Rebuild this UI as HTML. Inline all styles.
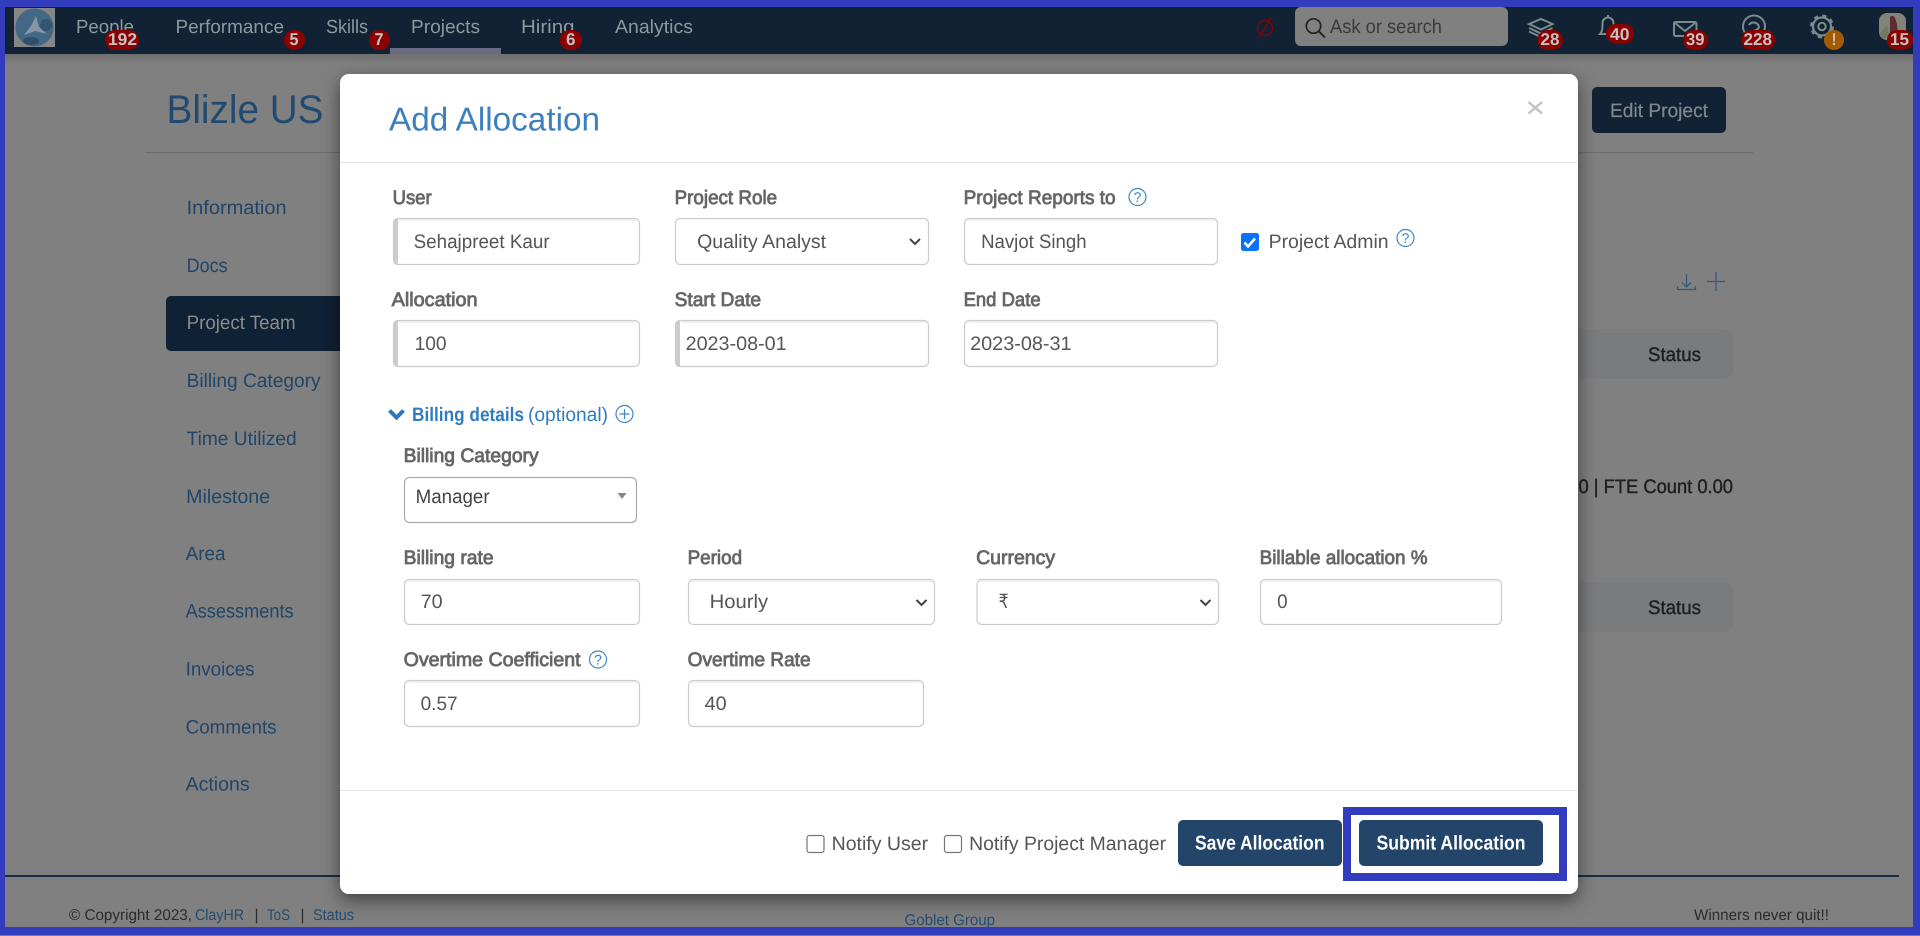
<!DOCTYPE html>
<html lang="en">
<head>
<meta charset="utf-8">
<title>Add Allocation</title>
<style>
html,body{margin:0;padding:0;background:#808080;width:1920px;height:936px;overflow:hidden}
svg{display:block;position:absolute;left:0;top:0}
text{font-family:"Liberation Sans",sans-serif;text-rendering:geometricPrecision;white-space:pre}
.nav{font-size:19px;fill:#8b9a9d}
.bd{font-size:17px;font-weight:bold;fill:#c6c2c2}
.side{font-size:19.5px;fill:#1f4568;transform:translate(-.4px,-.8px)}
.lb{font-size:19.5px;fill:#666;stroke:#666;stroke-width:.8px;transform:translate(-.4px,-.8px)}
.val{font-size:19.5px;fill:#555;transform:translate(-.4px,-.8px)}
.ft{font-size:15.5px;fill:#2b2b2b}
.lk{font-size:15.5px;fill:#234c70}
.st{font-size:19.5px;fill:#1f1f1f;stroke:#1f1f1f;stroke-width:.4px}
.btn{font-size:20px;font-weight:bold;fill:#fff;transform:translateY(-.4px)}
.inp{fill:#fff;stroke:#ccc;stroke-width:1.2px}
.tp{stroke:#ececec;stroke-width:1.5px}
.band{fill:#ccc}
.chev{fill:none;stroke:#444;stroke-width:2px}
.q{fill:none;stroke:#3f86c8;stroke-width:1.2px}
.qt{font-size:14px;fill:#3f86c8;text-anchor:middle}
.hi{fill:none;stroke:#7b8b90;stroke-width:2px}
.red{fill:#8b0000}
</style>
</head>
<body>
<svg width="1920" height="936" viewBox="0 0 1920 936" xmlns="http://www.w3.org/2000/svg">
<defs>
<linearGradient id="hs" x1="0" y1="0" x2="0" y2="1"><stop offset="0" stop-color="#6e6e6e"/><stop offset="1" stop-color="#808080"/></linearGradient>
<filter id="ms" x="-5%" y="-8%" width="110%" height="116%"><feDropShadow dx="0" dy="6" stdDeviation="9" flood-color="#000" flood-opacity=".5"/></filter>
</defs>

<!-- page background -->
<rect width="1920" height="936" fill="#808080"/>
<rect x="0" y="54" width="1920" height="10" fill="url(#hs)"/>

<!-- header -->
<rect x="0" y="0" width="1920" height="54" fill="#102234"/>
<rect x="14" y="8" width="41" height="39" fill="#868686"/>
<ellipse cx="34.5" cy="27.5" rx="19" ry="19" fill="#426886"/>
<circle cx="46" cy="25" r="6" fill="#335572"/>
<ellipse cx="31" cy="41" rx="8" ry="4" fill="#2f4e6a"/>
<path d="M36 16L39 27 47 34 35 31 24 35 31 26z" fill="#8796a2"/>

<text class="nav" x="76" y="33" textLength="58" lengthAdjust="spacingAndGlyphs">People</text>
<text class="nav" x="175.5" y="33" textLength="108.5" lengthAdjust="spacingAndGlyphs">Performance</text>
<text class="nav" x="326" y="33" textLength="42" lengthAdjust="spacingAndGlyphs">Skills</text>
<text class="nav" x="411" y="33" textLength="69" lengthAdjust="spacingAndGlyphs">Projects</text>
<text class="nav" x="521" y="33" textLength="53.5" lengthAdjust="spacingAndGlyphs">Hiring</text>
<text class="nav" x="615" y="33" textLength="78" lengthAdjust="spacingAndGlyphs">Analytics</text>
<rect x="390" y="48" width="111" height="6" fill="#6a6a85"/>

<rect class="red" x="105" y="30" width="34" height="20" rx="10"/>
<text class="bd" x="108" y="45" textLength="29" lengthAdjust="spacingAndGlyphs">192</text>
<rect class="red" x="284" y="30" width="21" height="20" rx="10"/>
<text class="bd" x="289.5" y="45" textLength="9" lengthAdjust="spacingAndGlyphs">5</text>
<rect class="red" x="369" y="30" width="21" height="20" rx="10"/>
<text class="bd" x="374.5" y="45" textLength="9" lengthAdjust="spacingAndGlyphs">7</text>
<rect class="red" x="560" y="30" width="22" height="20" rx="10"/>
<text class="bd" x="566" y="45" textLength="9.5" lengthAdjust="spacingAndGlyphs">6</text>

<!-- stopwatch off -->
<g fill="none" stroke="#8b0000" stroke-width="1.3">
<ellipse cx="1265" cy="28" rx="7.5" ry="7.5"/>
<path d="M1271 18L1259 38"/>
</g>

<!-- search -->
<rect x="1295" y="7" width="213" height="39" rx="6" fill="#808080"/>
<circle cx="1313.5" cy="26" r="7.2" fill="none" stroke="#222" stroke-width="1.7"/>
<path d="M1318.6 31.2L1325 37.5" stroke="#222" stroke-width="1.9" fill="none"/>
<text x="1330" y="33" font-size="19.5" fill="#3a3a3a" textLength="112" lengthAdjust="spacingAndGlyphs">Ask or search</text>

<!-- layers icon -->
<path class="hi" d="M1529 24L1541 19l11.500 5-11.500 5.500z"/>
<path class="hi" d="M1529 28L1541 33.500l11.500-5.500"/>
<path class="hi" d="M1529 31.500L1541 37l6-2.500"/>
<rect class="red" x="1537.500" y="30" width="25.500" height="20" rx="10"/>
<text class="bd" x="1540.500" y="45" textLength="19" lengthAdjust="spacingAndGlyphs">28</text>

<!-- bell -->
<path class="hi" d="M1600 34c2.500-2.500 2.500-6 2.500-11a5.500 5.500 0 0 1 11 0c0 5 0 8.500 2.500 11z"/>
<path class="hi" d="M1608 17v-2"/>
<rect class="red" x="1606" y="24" width="28" height="19.500" rx="9.700"/>
<text class="bd" x="1610" y="40" textLength="19.500" lengthAdjust="spacingAndGlyphs">40</text>

<!-- mail -->
<rect class="hi" x="1674" y="22" width="22.500" height="14" rx="1.500"/>
<path class="hi" d="M1675 23l10 8 10-8"/>
<rect class="red" x="1683" y="30" width="25" height="20" rx="10"/>
<text class="bd" x="1686" y="45" textLength="18.500" lengthAdjust="spacingAndGlyphs">39</text>

<!-- speedometer -->
<path class="hi" d="M1746 34a11 11 0 1 1 16 0"/>
<path class="hi" d="M1749 25a5.500 5.500 0 0 1 10 2c0 2-3 3-5 4"/>
<rect class="red" x="1741" y="30" width="34" height="20" rx="10"/>
<text class="bd" x="1743.500" y="45" textLength="28.500" lengthAdjust="spacingAndGlyphs">228</text>

<!-- gear -->
<circle cx="1822" cy="26.500" r="9" fill="none" stroke="#7b8b90" stroke-width="2.200"/>
<circle cx="1822" cy="26.500" r="10.500" fill="none" stroke="#7b8b90" stroke-width="3" stroke-dasharray="4.120 4.120"/>
<circle class="hi" cx="1822" cy="26.500" r="3.700"/>
<rect x="1824" y="30" width="20" height="20" rx="10" fill="#a45a00"/>
<text class="bd" x="1831.500" y="45" textLength="5" lengthAdjust="spacingAndGlyphs">!</text>

<!-- avatar -->
<rect x="1879" y="13" width="27" height="27" rx="8" fill="#85827a"/>
<path d="M1890 17c2-2 4-1 5 1l2 6 1 12h-8z" fill="#5d2b30"/>
<path d="M1880 33l7-8 3 13h-8z" fill="#6f7a5e"/>
<rect class="red" x="1887" y="30" width="26" height="20" rx="10"/>
<text class="bd" x="1890" y="45" textLength="19" lengthAdjust="spacingAndGlyphs">15</text>

<!-- page beneath the overlay -->
<text x="166.500" y="123" font-size="40" fill="#214a70" textLength="157" lengthAdjust="spacingAndGlyphs">Blizle US</text>
<rect x="145" y="152" width="1608" height="1" fill="#6c6c6c"/>
<rect x="1592" y="87" width="134" height="46" rx="5" fill="#102234"/>
<text x="1610" y="117" font-size="19.5" fill="#7f8a8f" stroke="#7f8a8f" stroke-width=".2" textLength="98" lengthAdjust="spacingAndGlyphs">Edit Project</text>

<text class="side" x="187" y="215" textLength="100" lengthAdjust="spacingAndGlyphs">Information</text>
<text class="side" x="187" y="273" textLength="41" lengthAdjust="spacingAndGlyphs">Docs</text>
<rect x="166" y="296" width="200" height="55" rx="5" fill="#0f2134"/>
<text class="side" style="fill:#8c8c8c" x="187" y="330" textLength="109" lengthAdjust="spacingAndGlyphs">Project Team</text>
<text class="side" x="187" y="388" textLength="134" lengthAdjust="spacingAndGlyphs">Billing Category</text>
<text class="side" x="187" y="446" textLength="110" lengthAdjust="spacingAndGlyphs">Time Utilized</text>
<text class="side" x="186.500" y="504" textLength="84" lengthAdjust="spacingAndGlyphs">Milestone</text>
<text class="side" x="186" y="561" textLength="40" lengthAdjust="spacingAndGlyphs">Area</text>
<text class="side" x="186" y="618.500" textLength="108" lengthAdjust="spacingAndGlyphs">Assessments</text>
<text class="side" x="186" y="676.500" textLength="69" lengthAdjust="spacingAndGlyphs">Invoices</text>
<text class="side" x="186" y="734.500" textLength="91" lengthAdjust="spacingAndGlyphs">Comments</text>
<text class="side" x="186" y="791.500" textLength="64" lengthAdjust="spacingAndGlyphs">Actions</text>

<!-- download and plus -->
<g fill="none" stroke="#2f5a85" stroke-width="1.300">
<path d="M1686.500 274v13M1682 282.500l4.500 4.500 4.500-4.500"/>
<path d="M1677.500 286v3.500h18v-3.500"/>
<path d="M1716 272v19M1707 281.500h18"/>
</g>

<!-- table fragments -->
<rect x="1500" y="329" width="233" height="50" rx="9" fill="#7a7b7d"/>
<text class="st" x="1648" y="361" textLength="53" lengthAdjust="spacingAndGlyphs">Status</text>
<text class="st" x="1578.500" y="493" textLength="154.500" lengthAdjust="spacingAndGlyphs">0 | FTE Count 0.00</text>
<rect x="1500" y="582" width="233" height="50" rx="9" fill="#7a7b7d"/>
<text class="st" x="1648" y="614" textLength="53" lengthAdjust="spacingAndGlyphs">Status</text>

<!-- footer -->
<rect x="5" y="875" width="1894" height="2" fill="#12304a"/>
<text class="ft" x="69" y="920" textLength="123" lengthAdjust="spacingAndGlyphs">© Copyright 2023,</text>
<text class="lk" x="195" y="920" textLength="49" lengthAdjust="spacingAndGlyphs">ClayHR</text>
<text class="ft" x="254.500" y="920">|</text>
<text class="lk" x="267" y="920" textLength="23" lengthAdjust="spacingAndGlyphs">ToS</text>
<text class="ft" x="300.500" y="920">|</text>
<text class="lk" x="313" y="920" textLength="41" lengthAdjust="spacingAndGlyphs">Status</text>
<text class="lk" x="904.500" y="925" textLength="90.500" lengthAdjust="spacingAndGlyphs">Goblet Group</text>
<text class="ft" x="1694" y="920" textLength="135" lengthAdjust="spacingAndGlyphs">Winners never quit!!</text>

<!-- modal -->
<rect x="340" y="74" width="1238" height="820" rx="9" fill="#fff" filter="url(#ms)"/>
<rect x="340" y="162" width="1238" height="1" fill="#e5e5e5"/>
<rect x="340" y="790" width="1238" height="1" fill="#e5e5e5"/>
<text x="389" y="130.500" font-size="33" fill="#3a7fbf" textLength="211" lengthAdjust="spacingAndGlyphs">Add Allocation</text>
<path d="M1528.500 102l13.500 11.500M1542 102l-13.500 11.500" stroke="#c6c6c6" stroke-width="2.500" fill="none"/>

<!-- row 1 -->
<text class="lb" x="393" y="205" textLength="39" lengthAdjust="spacingAndGlyphs">User</text>
<rect class="inp" x="393.500" y="218.500" width="246" height="46" rx="5"/>
<path class="band" d="M398 218v47h-1a4.500 4.500 0 0 1-4-4.500v-38a4.500 4.500 0 0 1 4-4.500z"/>
<path class="tp" d="M399 220h237"/>
<text class="val" x="414" y="249" textLength="136" lengthAdjust="spacingAndGlyphs">Sehajpreet Kaur</text>

<text class="lb" x="675" y="205" textLength="102.500" lengthAdjust="spacingAndGlyphs">Project Role</text>
<rect class="inp" x="675.500" y="218.500" width="253" height="46" rx="5"/>
<text class="val" x="697.500" y="249" textLength="129" lengthAdjust="spacingAndGlyphs">Quality Analyst</text>
<path class="chev" d="M910 239l5 5 5-5"/>

<text class="lb" x="964" y="205" textLength="152" lengthAdjust="spacingAndGlyphs">Project Reports to</text>
<circle class="q" cx="1137.500" cy="197" r="8.500"/>
<text class="qt" x="1137.500" y="202">?</text>
<rect class="inp" x="964.500" y="218.500" width="253" height="46" rx="5"/>
<path class="tp" d="M967 220h248"/>
<text class="val" x="981.500" y="249" textLength="105.500" lengthAdjust="spacingAndGlyphs">Navjot Singh</text>

<rect x="1241" y="233" width="18" height="18" rx="2.500" fill="#0a72f5"/>
<path d="M1244.500 242.500l3.500 4 7-8" fill="none" stroke="#fff" stroke-width="2.500"/>
<text class="val" x="1269" y="249" textLength="120" lengthAdjust="spacingAndGlyphs">Project Admin</text>
<circle class="q" cx="1405.500" cy="238" r="8.500"/>
<text class="qt" x="1405.500" y="243">?</text>

<!-- row 2 -->
<text class="lb" x="392" y="307" textLength="86" lengthAdjust="spacingAndGlyphs">Allocation</text>
<rect class="inp" x="393.500" y="320.500" width="246" height="46" rx="5"/>
<path class="band" d="M398 320v47h-1a4.500 4.500 0 0 1-4-4.500v-38a4.500 4.500 0 0 1 4-4.500z"/>
<path class="tp" d="M399 322h237"/>
<text class="val" x="415" y="351" textLength="32" lengthAdjust="spacingAndGlyphs">100</text>

<text class="lb" x="675" y="307" textLength="86.500" lengthAdjust="spacingAndGlyphs">Start Date</text>
<rect class="inp" x="675.500" y="320.500" width="253" height="46" rx="5"/>
<path class="band" d="M680 320v47h-1a4.500 4.500 0 0 1-4-4.500v-38a4.500 4.500 0 0 1 4-4.500z"/>
<path class="tp" d="M681 322h244"/>
<text class="val" x="686" y="351" textLength="101" lengthAdjust="spacingAndGlyphs">2023-08-01</text>

<text class="lb" x="964" y="307" textLength="77" lengthAdjust="spacingAndGlyphs">End Date</text>
<rect class="inp" x="964.500" y="320.500" width="253" height="46" rx="5"/>
<path class="tp" d="M967 322h248"/>
<text class="val" x="970.500" y="351" textLength="101.500" lengthAdjust="spacingAndGlyphs">2023-08-31</text>

<!-- billing details -->
<path d="M389.500 410.500l7 7 7-7" fill="none" stroke="#2a78bd" stroke-width="4"/>
<text x="412" y="421" font-size="19.500" font-weight="bold" fill="#2f7cc0" textLength="112" lengthAdjust="spacingAndGlyphs">Billing details</text>
<text x="528" y="421" font-size="19.500" fill="#2f7cc0" textLength="80" lengthAdjust="spacingAndGlyphs">(optional)</text>
<circle class="q" cx="624.500" cy="414" r="8.500"/>
<path class="q" d="M624.500 409v10M619.500 414h10"/>

<text class="lb" x="404" y="463" textLength="135" lengthAdjust="spacingAndGlyphs">Billing Category</text>
<rect x="404.500" y="477.500" width="232" height="45" rx="5" fill="#fff" stroke="#aaa" stroke-width="1.200"/>
<text class="val" style="fill:#444" x="416" y="504" textLength="74" lengthAdjust="spacingAndGlyphs">Manager</text>
<path d="M617.500 493h9l-4.500 6z" fill="#888"/>

<!-- row 3 -->
<text class="lb" x="404" y="565" textLength="90" lengthAdjust="spacingAndGlyphs">Billing rate</text>
<rect class="inp" x="404.500" y="579.500" width="235" height="45" rx="5"/>
<path class="tp" d="M407 581h230"/>
<text class="val" x="421" y="609" textLength="22" lengthAdjust="spacingAndGlyphs">70</text>

<text class="lb" x="688" y="565" textLength="54.500" lengthAdjust="spacingAndGlyphs">Period</text>
<rect class="inp" x="688.500" y="579.500" width="246" height="45" rx="5"/>
<path class="tp" d="M691 581h241"/>
<text class="val" x="710" y="609" textLength="58.500" lengthAdjust="spacingAndGlyphs">Hourly</text>
<path class="chev" d="M916.500 600l5 5 5-5"/>

<text class="lb" x="976.500" y="565" textLength="79" lengthAdjust="spacingAndGlyphs">Currency</text>
<rect class="inp" x="977" y="579.500" width="241.500" height="45" rx="5"/>
<path class="tp" d="M980 581h236"/>
<text class="val" x="999" y="609" textLength="10" lengthAdjust="spacingAndGlyphs">₹</text>
<path class="chev" d="M1200.500 600l5 5 5-5"/>

<text class="lb" x="1260" y="565" textLength="168" lengthAdjust="spacingAndGlyphs">Billable allocation %</text>
<rect class="inp" x="1260.500" y="579.500" width="241" height="45" rx="5"/>
<path class="tp" d="M1263 581h236"/>
<text class="val" x="1277.500" y="609" textLength="10.500" lengthAdjust="spacingAndGlyphs">0</text>

<!-- row 4 -->
<text class="lb" x="404" y="667" textLength="177" lengthAdjust="spacingAndGlyphs">Overtime Coefficient</text>
<circle class="q" cx="598" cy="659.500" r="8.500"/>
<text class="qt" x="598" y="664.500">?</text>
<rect class="inp" x="404.500" y="680.500" width="235" height="46" rx="5"/>
<path class="tp" d="M407 682h230"/>
<text class="val" x="421" y="711" textLength="37" lengthAdjust="spacingAndGlyphs">0.57</text>

<text class="lb" x="688" y="667" textLength="123" lengthAdjust="spacingAndGlyphs">Overtime Rate</text>
<rect class="inp" x="688.500" y="680.500" width="235" height="46" rx="5"/>
<path class="tp" d="M691 682h230"/>
<text class="val" x="705" y="711" textLength="22" lengthAdjust="spacingAndGlyphs">40</text>

<!-- modal footer -->
<rect x="807" y="835.500" width="17" height="17" rx="2.500" fill="#fff" stroke="#767676" stroke-width="1.200"/>
<text class="val" x="832" y="851" textLength="96.500" lengthAdjust="spacingAndGlyphs">Notify User</text>
<rect x="944.500" y="835.500" width="17" height="17" rx="2.500" fill="#fff" stroke="#767676" stroke-width="1.200"/>
<text class="val" x="969.500" y="851" textLength="197" lengthAdjust="spacingAndGlyphs">Notify Project Manager</text>
<rect x="1178" y="820" width="164" height="46" rx="5" fill="#234569"/>
<text class="btn" x="1195" y="850" textLength="129.500" lengthAdjust="spacingAndGlyphs">Save Allocation</text>

<rect x="1347" y="811" width="216" height="66" fill="#fff" stroke="#333cbc" stroke-width="8"/>
<rect x="1359" y="820" width="184" height="46" rx="5" fill="#234569"/>
<text class="btn" x="1376.500" y="850" textLength="149" lengthAdjust="spacingAndGlyphs">Submit Allocation</text>

<!-- annotation frame -->
<rect x="0" y="0" width="1920" height="7" fill="#333cbc"/>
<rect x="0" y="0" width="5" height="935" fill="#333cbc"/>
<rect x="1913" y="0" width="7" height="935" fill="#333cbc"/>
<rect x="0" y="927" width="1920" height="8" fill="#333cbc"/>
</svg>
</body>
</html>
